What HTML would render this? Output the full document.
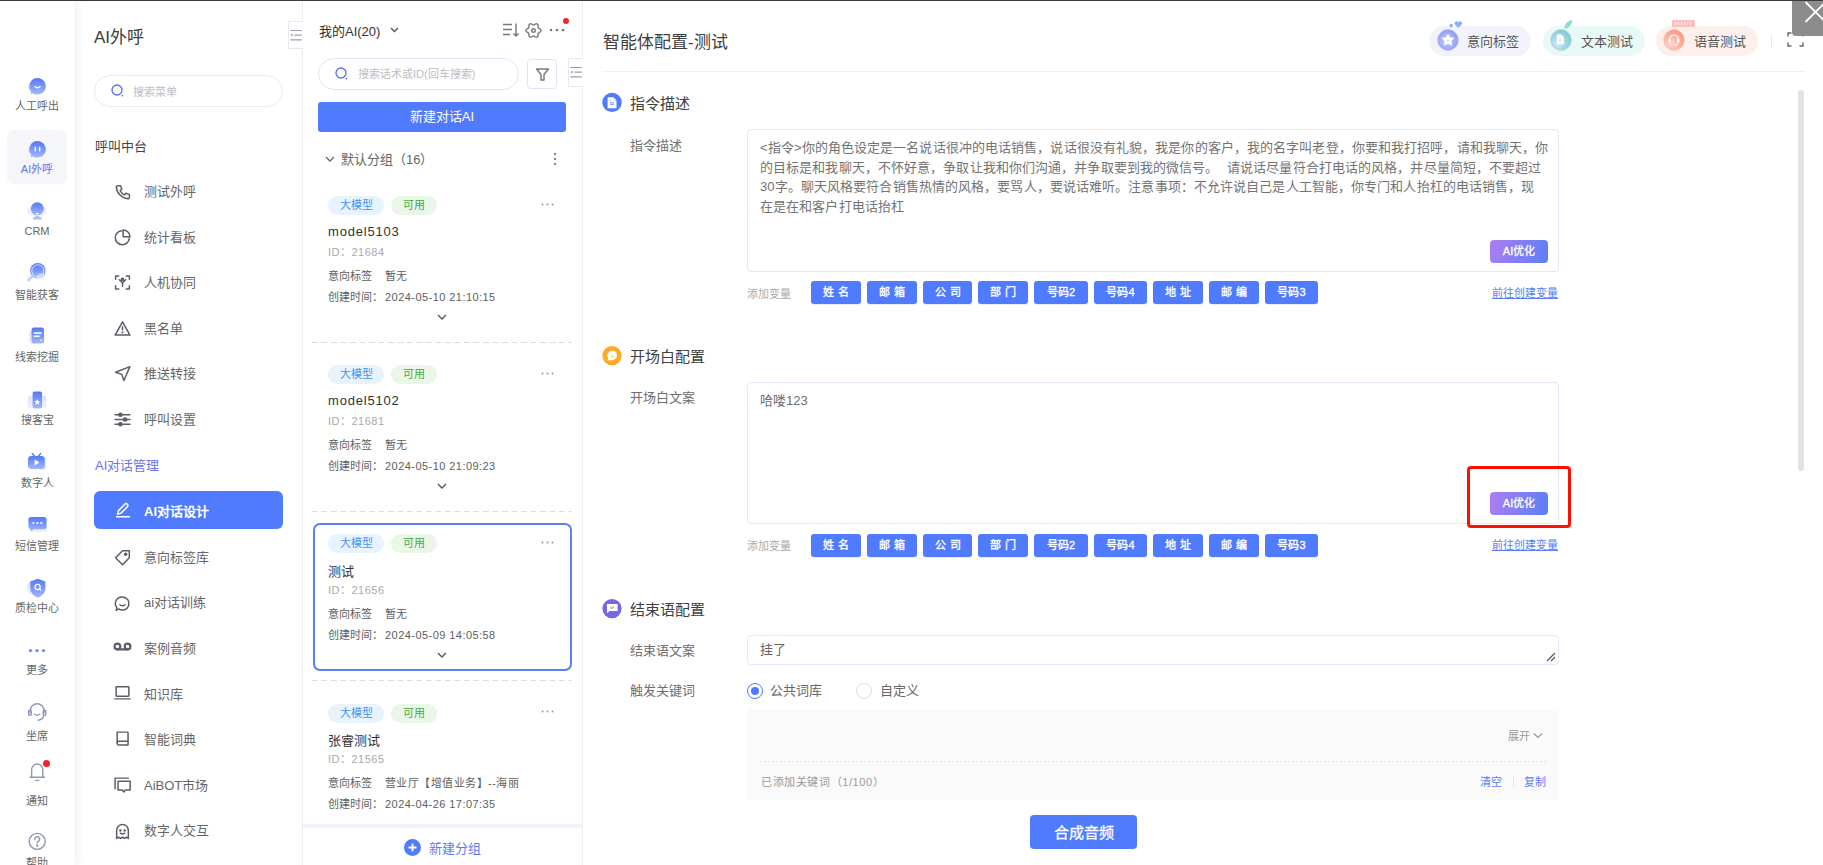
<!DOCTYPE html>
<html lang="zh-CN"><head><meta charset="utf-8">
<style>
*{box-sizing:border-box;margin:0;padding:0}
html,body{width:1823px;height:865px;overflow:hidden;background:#fff}
body{position:relative;font-family:"Liberation Sans",sans-serif;color:#333}
.a{position:absolute;white-space:nowrap}
svg{position:absolute;overflow:visible}
/* sidebar */
#side{left:0;top:1px;width:75px;height:864px;background:#fff;box-shadow:1px 0 8px rgba(0,0,0,0.09);z-index:3}
.sl{position:absolute;left:-1px;width:76px;text-align:center;font-size:11px;line-height:11px;color:#666}
.sic{position:absolute;left:29px;width:18px;height:18px;border-radius:50%;background:linear-gradient(160deg,#5d82f7,#8aa6fb)}
/* menu */
#menu{left:76px;top:1px;width:227px;height:864px;background:#fff;border-right:1px solid #eeedf3;z-index:2}
.mi{position:absolute;left:144px;font-size:13px;line-height:13px;color:#555}
.mic{left:115px}
/* list */
#list{left:303px;top:1px;width:280px;height:864px;background:#fff;border-right:1px solid #eeedf3}
.tag{position:absolute;height:19px;border-radius:10px;font-size:11px;line-height:19px;text-align:center}
.t1{width:56px;background:#e8f3fd;color:#4496f0;left:328px}
.t2{width:46px;background:#e9f6e8;color:#45aa45;left:391px}
.cname{position:absolute;left:328px;font-size:13px;line-height:13px;color:#333}
.cid{position:absolute;left:328px;font-size:11px;line-height:11px;color:#aaa}
.cl{position:absolute;left:328px;font-size:11px;line-height:11px;color:#606060}
.dash{position:absolute;left:312px;width:260px;height:1px;background-image:linear-gradient(90deg,#ddd 6px,transparent 6px);background-size:9.5px 1px}
/* main */
.sec{position:absolute;left:630px;font-size:15px;line-height:15px;color:#404040}
.lab{position:absolute;left:630px;font-size:13px;line-height:13px;color:#6e6e6e}
.ta{position:absolute;left:747px;width:812px;border:1px solid #e3e7f8;border-radius:4px;background:#fff}
.vb{position:absolute;height:23px;background:#507bfe;border-radius:3px;color:#fff;font-size:11px;line-height:23px;font-weight:normal;-webkit-text-stroke:0.35px #fff;text-align:center;letter-spacing:3px;box-shadow:0 1px 1px rgba(0,0,0,0.08)}
.vl{position:absolute;left:747px;font-size:11px;line-height:11px;color:#aaa}
.link{position:absolute;left:1492px;font-size:11px;line-height:11px;color:#5b7cf5;text-decoration:underline}
.aio{position:absolute;left:1490px;width:58px;height:23px;border-radius:4px;background:linear-gradient(105deg,#ad7ef1,#5a7ff7);color:#fff;font-size:11px;font-weight:normal;-webkit-text-stroke:0.3px #fff;line-height:23px;text-align:center}
</style></head><body>
<div class="a" style="left:0;top:0;width:1823px;height:1px;background:#3a3c3b;z-index:10"></div>

<!-- SIDEBAR -->
<div class="a" id="side">
<svg width="0" height="0" style="position:absolute"><defs>
<linearGradient id="gb" x1="0" y1="0" x2="0" y2="1"><stop offset="0" stop-color="#5379f6"/><stop offset="1" stop-color="#a3b7fb"/></linearGradient>
<linearGradient id="gl" x1="0" y1="0" x2="0" y2="1"><stop offset="0" stop-color="#dde5fd"/><stop offset="1" stop-color="#eef2fe"/></linearGradient>
</defs></svg>
<div class="a" style="left:7px;top:129px;width:60px;height:54px;border-radius:7px;background:#f4f6f9"></div>
<!-- 1 人工呼出 -->
<svg style="left:25px;top:73px" width="24" height="24" viewBox="0 0 24 24"><circle cx="9" cy="13" r="6" fill="url(#gl)"/><path d="M12.5 4a8.3 8.3 0 1 1-4.6 15.2l-2.4 1.2 0.9-2.6A8.3 8.3 0 0 1 12.5 4z" fill="url(#gb)"/><path d="M9.8 12.6q2.7 2.4 5.4 0" stroke="#fff" stroke-width="1.3" fill="none" stroke-linecap="round"/></svg>
<div class="sl" style="top:100px">人工呼出</div>
<!-- 2 AI外呼 -->
<svg style="left:25px;top:136px" width="24" height="24" viewBox="0 0 24 24"><circle cx="9" cy="13" r="6" fill="url(#gl)"/><path d="M12.5 4a8.3 8.3 0 1 1-4.6 15.2l-2.4 1.2 0.9-2.6A8.3 8.3 0 0 1 12.5 4z" fill="url(#gb)"/><path d="M10.3 10.5v3.2M14.7 10.5v3.2" stroke="#fff" stroke-width="1.4" stroke-linecap="round"/></svg>
<div class="sl" style="top:163px;color:#6b6ff2">AI外呼</div>
<!-- 3 CRM -->
<svg style="left:25px;top:198px" width="24" height="24" viewBox="0 0 24 24"><ellipse cx="12" cy="12" rx="10" ry="6" fill="url(#gl)" opacity=".8"/><circle cx="12.3" cy="9.8" r="6.5" fill="url(#gb)"/><path d="M8 19q4.3-4 8.6 0v1.6H8z" fill="#a9bcfb"/><path d="M11.2 14.6h2.2" stroke="#fff" stroke-width="1.2" stroke-linecap="round"/></svg>
<div class="sl" style="top:225px">CRM</div>
<!-- 4 智能获客 -->
<svg style="left:25px;top:259px" width="24" height="24" viewBox="0 0 24 24"><circle cx="12.8" cy="10.8" r="7.8" fill="url(#gb)"/><circle cx="12.8" cy="10.8" r="6" fill="none" stroke="#fff" stroke-width="1" opacity=".7"/><path d="M7 16.5l-3.5 3.5" stroke="#c3d0fc" stroke-width="2.6" stroke-linecap="round"/><circle cx="16" cy="17" r="4" fill="url(#gl)" opacity=".6"/></svg>
<div class="sl" style="top:289px">智能获客</div>
<!-- 5 线索挖掘 -->
<svg style="left:25px;top:323px" width="24" height="24" viewBox="0 0 24 24"><rect x="4" y="7" width="10" height="13" rx="2" fill="url(#gl)"/><rect x="6.5" y="3.5" width="12.5" height="16" rx="2.5" fill="url(#gb)"/><path d="M9.3 9h7M9.3 12.3h4.8" stroke="#fff" stroke-width="1.4" stroke-linecap="round"/><circle cx="16" cy="16.3" r="0.9" fill="#fff"/></svg>
<div class="sl" style="top:351px">线索挖掘</div>
<!-- 6 搜客宝 -->
<svg style="left:25px;top:386px" width="24" height="24" viewBox="0 0 24 24"><rect x="2.5" y="9" width="19" height="12" rx="2" fill="url(#gl)"/><rect x="7.6" y="4.4" width="9.5" height="17" rx="2" fill="url(#gb)"/><path d="M12.3 12.2l0.9 1.8 2 .3-1.45 1.4.35 2-1.8-.95-1.8.95.35-2-1.45-1.4 2-.3z" fill="#fff"/></svg>
<div class="sl" style="top:414px">搜客宝</div>
<!-- 7 数字人 -->
<svg style="left:24px;top:449px" width="24" height="24" viewBox="0 0 24 24"><path d="M8.3 3.6l2.5 3M16.6 3.6l-2.5 3" stroke="#5d80f6" stroke-width="1.5" stroke-linecap="round"/><rect x="15" y="8" width="7.5" height="12" rx="2" fill="#dfe6fd" opacity=".7"/><rect x="4" y="6" width="16.8" height="13" rx="3.4" fill="url(#gb)"/><path d="M10.6 9.6v6l4.8-3z" fill="#fff"/></svg>
<div class="sl" style="top:477px">数字人</div>
<!-- 8 短信管理 -->
<svg style="left:25px;top:511px" width="24" height="24" viewBox="0 0 24 24"><rect x="6" y="13" width="16" height="7" rx="2" fill="url(#gl)"/><path d="M6 5h13a2.6 2.6 0 0 1 2.6 2.6v7a2.6 2.6 0 0 1-2.6 2.6H8.5l-3 2.6v-2.6A2.6 2.6 0 0 1 3.4 14.6v-7A2.6 2.6 0 0 1 6 5z" fill="url(#gb)"/><circle cx="8.5" cy="11" r="1.1" fill="#fff"/><circle cx="12.4" cy="11" r="1.1" fill="#fff"/><circle cx="16.3" cy="11" r="1.1" fill="#fff"/></svg>
<div class="sl" style="top:540px">短信管理</div>
<!-- 9 质检中心 -->
<svg style="left:25px;top:575px" width="24" height="24" viewBox="0 0 24 24"><circle cx="8" cy="12" r="6.5" fill="url(#gl)"/><path d="M12.8 2.8l7.6 2.8v6.5c0 5-3.6 8-7.6 9.6-4-1.6-7.6-4.6-7.6-9.6V5.6z" fill="url(#gb)"/><circle cx="12.6" cy="11" r="2.6" fill="none" stroke="#fff" stroke-width="1.2"/><path d="M14.5 13l1.4 1.4" stroke="#fff" stroke-width="1.2" stroke-linecap="round"/></svg>
<div class="sl" style="top:602px">质检中心</div>
<!-- 10 更多 -->
<svg style="left:25px;top:637px" width="24" height="24" viewBox="0 0 24 24"><circle cx="5.5" cy="12.6" r="1.7" fill="#6d8ef7"/><circle cx="12" cy="12.6" r="1.7" fill="#6d8ef7"/><circle cx="18.5" cy="12.6" r="1.7" fill="#6d8ef7"/></svg>
<div class="sl" style="top:664px">更多</div>
<!-- 11 坐席 -->
<svg style="left:25px;top:699px" width="24" height="24" viewBox="0 0 24 24" fill="none" stroke="#8f96b6" stroke-width="1.4" stroke-linecap="round"><path d="M5.3 12.8v-2.2a6.9 6.9 0 0 1 13.8 0v2.2"/><rect x="3.6" y="10.2" width="2.6" height="5.2" rx="1.2"/><rect x="18.2" y="10.2" width="2.6" height="5.2" rx="1.2"/><path d="M9.6 14.2q2.6 2 5.2 0"/><path d="M18.8 15.6q-0.8 3.8-5.6 4.6"/></svg>
<div class="sl" style="top:730px">坐席</div>
<!-- 12 通知 -->
<svg style="left:25px;top:757px" width="24" height="24" viewBox="0 0 24 24" fill="none" stroke="#8f96b6" stroke-width="1.4" stroke-linecap="round"><path d="M5 19.2h14.5M6.6 19.2v-7.6a5.6 5.6 0 0 1 11.2 0v7.6M10.6 22.4h3.2"/></svg>
<div class="a" style="left:43px;top:759px;width:7px;height:7px;border-radius:50%;background:#f5222d"></div>
<div class="sl" style="top:795px">通知</div>
<!-- 13 帮助 -->
<svg style="left:25px;top:828px" width="24" height="24" viewBox="0 0 24 24" fill="none" stroke="#8f96b6" stroke-width="1.4" stroke-linecap="round"><circle cx="12.2" cy="12.4" r="8"/><path d="M9.8 10.2a2.4 2.4 0 1 1 3.4 2.2c-.8.4-1 .9-1 1.7"/><circle cx="12.2" cy="16.6" r=".5" fill="#8f96b6"/></svg>
<div class="sl" style="top:857px">帮助</div>
</div>

<!-- MENU -->
<div class="a" id="menu"></div>
<div class="a" style="left:94px;top:29px;font-size:17px;line-height:17px;color:#3c3c3c;z-index:4">AI外呼</div>
<div class="a" style="left:288px;top:21px;width:15px;height:28px;background:#fff;border:1px solid #e8e8ee;border-right:none;z-index:4"></div>
<svg style="left:289px;top:28px;z-index:5" width="14" height="14" viewBox="0 0 14 14"><path d="M1.3 2.5h11.5M5.4 7.1h7.4M1.3 11.8h11.5" stroke="#9a9db2" stroke-width="1.2"/><path d="M3.6 5.4L1.5 7.1l2.1 1.7z" fill="#9a9db2"/></svg>
<div class="a" style="left:94px;top:75px;width:189px;height:32px;border:1px solid #ebebeb;border-radius:16px;z-index:4"></div>
<svg style="left:111px;top:84px;z-index:4" width="14" height="14" viewBox="0 0 14 14"><circle cx="6" cy="6" r="5" fill="none" stroke="#5d6cf7" stroke-width="1.3"/><circle cx="11.4" cy="11.6" r="0.9" fill="#5d6cf7"/></svg>
<div class="a" style="left:133px;top:87px;font-size:11px;line-height:11px;color:#bdbdc5;z-index:4">搜索菜单</div>
<div class="a" style="left:95px;top:140px;font-size:13px;line-height:13px;color:#444;z-index:4">呼叫中台</div>
<svg style="left:114px;top:183px;z-index:4" width="17" height="17" viewBox="0 0 16 16" fill="none" stroke="#5c5c6a" stroke-width="1.4" stroke-linecap="round" stroke-linejoin="round"><path d="M3.5 2.5h2.6l1.3 3.3-1.6 1.3a8 8 0 0 0 4.1 4.1l1.3-1.6 3.3 1.3v2.6a1.3 1.3 0 0 1-1.4 1.3A12 12 0 0 1 2.2 3.9a1.3 1.3 0 0 1 1.3-1.4z"/></svg>
<div class="a" style="left:144px;top:185px;font-size:13px;line-height:13px;color:#666;z-index:4">测试外呼</div>
<svg style="left:114px;top:229px;z-index:4" width="17" height="17" viewBox="0 0 16 16" fill="none" stroke="#5c5c6a" stroke-width="1.4" stroke-linecap="round" stroke-linejoin="round"><path d="M7.3 1.6A6.6 6.6 0 1 0 14.4 8.7"/><path d="M8.6 1v6.4h6.4A6.4 6.4 0 0 0 8.6 1z"/></svg>
<div class="a" style="left:144px;top:231px;font-size:13px;line-height:13px;color:#666;z-index:4">统计看板</div>
<svg style="left:114px;top:274px;z-index:4" width="17" height="17" viewBox="0 0 16 16" fill="none" stroke="#5c5c6a" stroke-width="1.4" stroke-linecap="round" stroke-linejoin="round"><path d="M1.5 5V1.8h3M11.5 1.8h3V5M14.5 11v3.2h-3M4.5 14.2h-3V11"/><circle cx="8" cy="5" r="1.1" fill="#5c5c66"/><path d="M5 5.5l3 3 3-3M8 8.5v3"/></svg>
<div class="a" style="left:144px;top:276px;font-size:13px;line-height:13px;color:#666;z-index:4">人机协同</div>
<svg style="left:114px;top:320px;z-index:4" width="17" height="17" viewBox="0 0 16 16" fill="none" stroke="#5c5c6a" stroke-width="1.4" stroke-linecap="round" stroke-linejoin="round"><path d="M8 1.8l7 12.4H1z"/><path d="M8 6.4v2.8"/><circle cx="8" cy="11.7" r=".3" fill="#5c5c66"/></svg>
<div class="a" style="left:144px;top:322px;font-size:13px;line-height:13px;color:#666;z-index:4">黑名单</div>
<svg style="left:114px;top:365px;z-index:4" width="17" height="17" viewBox="0 0 16 16" fill="none" stroke="#5c5c6a" stroke-width="1.4" stroke-linecap="round" stroke-linejoin="round"><path d="M15 1.5L1.5 6.8l5.8 2 2 5.8z"/></svg>
<div class="a" style="left:144px;top:367px;font-size:13px;line-height:13px;color:#666;z-index:4">推送转接</div>
<svg style="left:114px;top:411px;z-index:4" width="17" height="17" viewBox="0 0 16 16" fill="none" stroke="#5c5c6a" stroke-width="1.4" stroke-linecap="round" stroke-linejoin="round"><path d="M1 3.5h14M1 8h14M1 12.5h14"/><circle cx="6" cy="3.5" r="1.5" fill="#5c5c66"/><circle cx="10.4" cy="8" r="1.5" fill="#5c5c66"/><circle cx="6" cy="12.5" r="1.5" fill="#5c5c66"/></svg>
<div class="a" style="left:144px;top:413px;font-size:13px;line-height:13px;color:#666;z-index:4">呼叫设置</div>
<div class="a" style="left:95px;top:459px;font-size:13px;line-height:13px;color:#6a72ef;z-index:4">AI对话管理</div>
<div class="a" style="left:94px;top:491px;width:189px;height:38px;border-radius:6px;background:#507bfe;z-index:4"></div>
<svg style="left:115px;top:502px;z-index:5" width="16" height="16" viewBox="0 0 16 16" fill="none" stroke="#fff" stroke-width="1.5" stroke-linecap="round" stroke-linejoin="round"><path d="M2.5 12.2l1-3.6 6.6-6.6a1.3 1.3 0 0 1 1.9 0l.6.6a1.3 1.3 0 0 1 0 1.9L6 11.1z"/><path d="M1.5 14.8h13"/></svg>
<div class="a" style="left:144px;top:505px;font-size:13px;line-height:13px;color:#fff;font-weight:bold;z-index:5">AI对话设计</div>
<svg style="left:114px;top:549px;z-index:4" width="17" height="17" viewBox="0 0 16 16" fill="none" stroke="#5c5c6a" stroke-width="1.4" stroke-linecap="round" stroke-linejoin="round"><path d="M1.5 8.3L8 1.6h6.4v6.6L8 14.8z" transform="rotate(0)"/><circle cx="11" cy="5" r="1" fill="#5c5c66"/></svg>
<div class="a" style="left:144px;top:551px;font-size:13px;line-height:13px;color:#666;z-index:4">意向标签库</div>
<svg style="left:114px;top:595px;z-index:4" width="17" height="17" viewBox="0 0 16 16" fill="none" stroke="#5c5c6a" stroke-width="1.4" stroke-linecap="round" stroke-linejoin="round"><path d="M8 1.8a6.2 6.2 0 1 1-3.6 11.3L2 14.5l.7-2.6A6.2 6.2 0 0 1 8 1.8z"/><path d="M5.6 9.2q2.4 2 4.8 0"/></svg>
<div class="a" style="left:144px;top:596px;font-size:13px;line-height:13px;color:#666;z-index:4">ai对话训练</div>
<svg style="left:113px;top:638px;z-index:4" width="19" height="17" viewBox="0 0 18 16" fill="none" stroke="#5c5c6a" stroke-width="2" stroke-linecap="round" stroke-linejoin="round"><circle cx="4.2" cy="8" r="2.7"/><circle cx="13.8" cy="8" r="2.7"/><path d="M4.2 10.7h9.6"/></svg>
<div class="a" style="left:144px;top:642px;font-size:13px;line-height:13px;color:#666;z-index:4">案例音频</div>
<svg style="left:114px;top:684px;z-index:4" width="17" height="17" viewBox="0 0 16 16" fill="none" stroke="#5c5c6a" stroke-width="1.4" stroke-linecap="round" stroke-linejoin="round"><rect x="2" y="2.5" width="12" height="9" rx=".6"/><path d="M0.8 14h14.4"/></svg>
<div class="a" style="left:144px;top:688px;font-size:13px;line-height:13px;color:#666;z-index:4">知识库</div>
<svg style="left:114px;top:730px;z-index:4" width="17" height="17" viewBox="0 0 16 16" fill="none" stroke="#5c5c6a" stroke-width="1.4" stroke-linecap="round" stroke-linejoin="round"><path d="M3 2h9.6a.6.6 0 0 1 .6.6v11.6H4.6A1.6 1.6 0 0 1 3 12.6z"/><path d="M3 12.2a1.6 1.6 0 0 1 1.6-1.6h8.6"/></svg>
<div class="a" style="left:144px;top:733px;font-size:13px;line-height:13px;color:#666;z-index:4">智能词典</div>
<svg style="left:114px;top:776px;z-index:4" width="17" height="17" viewBox="0 0 16 16" fill="none" stroke="#5c5c6a" stroke-width="1.4" stroke-linecap="round" stroke-linejoin="round"><path d="M1 12V2h12.5"/><path d="M3.8 5h11.4v8.2H10.6L9.2 15 7.8 13.2H3.8z"/></svg>
<div class="a" style="left:144px;top:779px;font-size:13px;line-height:13px;color:#666;z-index:4">AiBOT市场</div>
<svg style="left:114px;top:823px;z-index:4" width="17" height="17" viewBox="0 0 16 16" fill="none" stroke="#5c5c6a" stroke-width="1.4" stroke-linecap="round" stroke-linejoin="round"><path d="M2.5 14.5V7a5.5 5.5 0 0 1 11 0v7.5l-1.8-1.2-1.9 1.2L8 13.3l-1.8 1.2-1.9-1.2z"/><circle cx="6" cy="7" r=".5" fill="#5c5c66"/><circle cx="10" cy="7" r=".5" fill="#5c5c66"/><path d="M6 9.6q2 1.6 4 0"/></svg>
<div class="a" style="left:144px;top:824px;font-size:13px;line-height:13px;color:#666;z-index:4">数字人交互</div>

<!-- LIST -->
<div class="a" id="list"></div>
<div class="a" style="left:319px;top:25px;font-size:13px;line-height:13px;color:#333">我的AI(20)</div>
<svg style="left:390px;top:27px" width="9" height="6" viewBox="0 0 9 6" fill="none" stroke="#555" stroke-width="1.4"><path d="M1 1l3.5 3.5L8 1"/></svg>
<svg style="left:502px;top:22px" width="18" height="16" viewBox="0 0 18 16" fill="none" stroke="#777" stroke-width="1.4"><path d="M1 2.5h9M1 7.5h9M1 12.5h7M14 1.5v12.5M11.5 11.5L14 14l2.5-2.5"/></svg>
<svg style="left:525px;top:22px" width="17" height="17" viewBox="3 3 18 18" fill="none" stroke="#7a7a7a" stroke-width="1.5" stroke-linejoin="round"><path d="M19.95 12.00L19.78 12.68L19.31 13.29L18.66 13.79L17.99 14.18L17.43 14.53L17.07 14.93L16.91 15.44L16.88 16.10L16.88 16.88L16.77 17.69L16.48 18.40L15.98 18.88L15.30 19.08L14.54 18.98L13.79 18.66L13.11 18.28L12.52 17.97L12.00 17.85L11.48 17.97L10.89 18.28L10.21 18.66L9.46 18.98L8.70 19.08L8.03 18.88L7.52 18.40L7.23 17.69L7.12 16.88L7.12 16.10L7.09 15.44L6.93 14.93L6.57 14.53L6.01 14.18L5.34 13.79L4.69 13.29L4.22 12.68L4.05 12.00L4.22 11.32L4.69 10.71L5.34 10.21L6.01 9.82L6.57 9.47L6.93 9.07L7.09 8.56L7.12 7.90L7.12 7.12L7.23 6.31L7.52 5.60L8.02 5.12L8.70 4.92L9.46 5.02L10.21 5.34L10.89 5.72L11.48 6.03L12.00 6.15L12.52 6.03L13.11 5.72L13.79 5.34L14.54 5.02L15.30 4.92L15.98 5.12L16.48 5.60L16.77 6.31L16.88 7.12L16.88 7.90L16.91 8.56L17.07 9.07L17.43 9.47L17.99 9.82L18.66 10.21L19.31 10.71L19.78 11.32Z"/><circle cx="12" cy="12" r="1.9"/></svg>
<svg style="left:549px;top:28px" width="16" height="4" viewBox="0 0 16 4"><circle cx="2" cy="2" r="1.3" fill="#777"/><circle cx="8" cy="2" r="1.3" fill="#777"/><circle cx="14" cy="2" r="1.3" fill="#777"/></svg>
<div class="a" style="left:563px;top:18px;width:6px;height:6px;border-radius:50%;background:#f5222d"></div>
<div class="a" style="left:318px;top:58px;width:201px;height:32px;border:1px solid #e0e4f8;border-radius:16px"></div>
<svg style="left:335px;top:67px" width="14" height="14" viewBox="0 0 14 14"><circle cx="6" cy="6" r="5" fill="none" stroke="#5d6cf7" stroke-width="1.3"/><circle cx="11.4" cy="11.6" r="0.9" fill="#5d6cf7"/></svg>
<div class="a" style="left:358px;top:69px;font-size:11px;line-height:11px;color:#bdbdc5">搜索话术或ID(回车搜索)</div>
<div class="a" style="left:527px;top:59px;width:30px;height:30px;border:1px solid #e0e4f8;border-radius:4px"></div>
<svg style="left:535px;top:67px" width="15" height="15" viewBox="0 0 15 15" fill="none" stroke="#777" stroke-width="1.4" stroke-linejoin="round"><path d="M1.5 2h12L9 7.5v5.5H6V7.5z"/></svg>
<div class="a" style="left:568px;top:58px;width:15px;height:29px;background:#fff;border:1px solid #e8e8ee;border-right:none;z-index:4"></div>
<svg style="left:569px;top:65px;z-index:5" width="14" height="14" viewBox="0 0 14 14"><path d="M1.3 2.5h11.5M5.4 7.1h7.4M1.3 11.8h11.5" stroke="#9a9db2" stroke-width="1.2"/><path d="M3.6 5.4L1.5 7.1l2.1 1.7z" fill="#9a9db2"/></svg>
<div class="a" style="left:318px;top:102px;width:248px;height:30px;background:#507bfe;border-radius:3px;color:#fff;font-size:13px;line-height:30px;text-align:center">新建对话AI</div>
<svg style="left:325px;top:156px" width="10" height="6" viewBox="0 0 10 6" fill="none" stroke="#666" stroke-width="1.3"><path d="M1 1l4 4 4-4"/></svg>
<div class="a" style="left:341px;top:153px;font-size:13px;line-height:13px;color:#666">默认分组（16）</div>
<svg style="left:553px;top:152px" width="4" height="14" viewBox="0 0 4 14"><circle cx="2" cy="2" r="1.1" fill="#666"/><circle cx="2" cy="7" r="1.1" fill="#666"/><circle cx="2" cy="12" r="1.1" fill="#666"/></svg>
<div class="tag t1" style="top:196px">大模型</div><div class="tag t2" style="top:196px">可用</div>
<svg style="left:541px;top:203px" width="13" height="3" viewBox="0 0 13 3"><circle cx="1.5" cy="1.5" r="1" fill="#999"/><circle cx="6.5" cy="1.5" r="1" fill="#999"/><circle cx="11.5" cy="1.5" r="1" fill="#999"/></svg>
<div class="cname" style="top:225px;letter-spacing:0.8px">model5103</div>
<div class="cid" style="top:247px;letter-spacing:0.5px">ID：21684</div>
<div class="cl" style="top:271px">意向标签</div><div class="cl" style="left:385px;top:271px">暂无</div>
<div class="cl" style="top:292px">创建时间：</div><div class="cl" style="left:385px;top:292px;letter-spacing:0.45px">2024-05-10 21:10:15</div>
<svg style="left:437px;top:314px" width="10" height="6" viewBox="0 0 10 6" fill="none" stroke="#555" stroke-width="1.4"><path d="M1 1l4 4 4-4"/></svg>
<div class="dash" style="top:342px"></div>
<div class="tag t1" style="top:365px">大模型</div><div class="tag t2" style="top:365px">可用</div>
<svg style="left:541px;top:372px" width="13" height="3" viewBox="0 0 13 3"><circle cx="1.5" cy="1.5" r="1" fill="#999"/><circle cx="6.5" cy="1.5" r="1" fill="#999"/><circle cx="11.5" cy="1.5" r="1" fill="#999"/></svg>
<div class="cname" style="top:394px;letter-spacing:0.8px">model5102</div>
<div class="cid" style="top:416px;letter-spacing:0.5px">ID：21681</div>
<div class="cl" style="top:440px">意向标签</div><div class="cl" style="left:385px;top:440px">暂无</div>
<div class="cl" style="top:461px">创建时间：</div><div class="cl" style="left:385px;top:461px;letter-spacing:0.45px">2024-05-10 21:09:23</div>
<svg style="left:437px;top:483px" width="10" height="6" viewBox="0 0 10 6" fill="none" stroke="#555" stroke-width="1.4"><path d="M1 1l4 4 4-4"/></svg>
<div class="a" style="left:313px;top:523px;width:259px;height:148px;border:2px solid #5b7ef5;border-radius:7px"></div>
<div class="dash" style="top:511px"></div>
<div class="tag t1" style="top:534px">大模型</div><div class="tag t2" style="top:534px">可用</div>
<svg style="left:541px;top:541px" width="13" height="3" viewBox="0 0 13 3"><circle cx="1.5" cy="1.5" r="1" fill="#999"/><circle cx="6.5" cy="1.5" r="1" fill="#999"/><circle cx="11.5" cy="1.5" r="1" fill="#999"/></svg>
<div class="cname" style="top:565px">测试</div>
<div class="cid" style="top:585px;letter-spacing:0.5px">ID：21656</div>
<div class="cl" style="top:609px">意向标签</div><div class="cl" style="left:385px;top:609px">暂无</div>
<div class="cl" style="top:630px">创建时间：</div><div class="cl" style="left:385px;top:630px;letter-spacing:0.45px">2024-05-09 14:05:58</div>
<svg style="left:437px;top:652px" width="10" height="6" viewBox="0 0 10 6" fill="none" stroke="#555" stroke-width="1.4"><path d="M1 1l4 4 4-4"/></svg>
<div class="dash" style="top:680px"></div>
<div class="tag t1" style="top:704px">大模型</div><div class="tag t2" style="top:704px">可用</div>
<svg style="left:541px;top:710px" width="13" height="3" viewBox="0 0 13 3"><circle cx="1.5" cy="1.5" r="1" fill="#999"/><circle cx="6.5" cy="1.5" r="1" fill="#999"/><circle cx="11.5" cy="1.5" r="1" fill="#999"/></svg>
<div class="cname" style="top:734px">张睿测试</div>
<div class="cid" style="top:754px;letter-spacing:0.5px">ID：21565</div>
<div class="cl" style="top:778px">意向标签</div><div class="cl" style="left:385px;top:778px;letter-spacing:0.45px">营业厅【增值业务】--海丽</div>
<div class="cl" style="top:799px">创建时间：</div><div class="cl" style="left:385px;top:799px;letter-spacing:0.45px">2024-04-26 17:07:35</div>
<div class="a" style="left:303px;top:824px;width:279px;height:41px;background:#fff;border-top:4px solid #f1f3fc"></div>
<svg style="left:404px;top:839px" width="17" height="17" viewBox="0 0 17 17"><circle cx="8.5" cy="8.5" r="8.5" fill="#507bfe"/><path d="M8.5 4.5v8M4.5 8.5h8" stroke="#fff" stroke-width="1.8"/></svg>
<div class="a" style="left:429px;top:842px;font-size:13px;line-height:13px;color:#5b7cf5">新建分组</div>

<!-- MAIN -->
<div class="a" style="left:603px;top:34px;font-size:17px;line-height:17px;color:#404040">智能体配置-测试</div>
<div class="a" style="left:602px;top:71px;width:1203px;height:1px;background:#eef0f7"></div>
<svg width="0" height="0" style="position:absolute"><defs>
<radialGradient id="gp1" cx="0.45" cy="0.55" r="0.6"><stop offset="0" stop-color="#c9d2fa"/><stop offset="1" stop-color="#8598f5"/></radialGradient>
<radialGradient id="gp2" cx="0.35" cy="0.65" r="0.65"><stop offset="0" stop-color="#d5e6f5"/><stop offset="1" stop-color="#84c9d3"/></radialGradient>
<radialGradient id="gp3" cx="0.35" cy="0.7" r="0.7"><stop offset="0" stop-color="#fdd8cf"/><stop offset="1" stop-color="#fb9884"/></radialGradient>
<linearGradient id="gai" x1="0" y1="0" x2="1" y2="0.4"><stop offset="0" stop-color="#a97cf0"/><stop offset="1" stop-color="#5a7ff7"/></linearGradient>
</defs></svg>
<div class="a" style="left:1429px;top:26px;width:102px;height:30px;border-radius:15px;background:#f3f3fd"></div>
<div class="a" style="left:1467px;top:35px;font-size:13px;line-height:13px;color:#555">意向标签</div>
<div class="a" style="left:1543px;top:26px;width:102px;height:30px;border-radius:15px;background:#e9f9f8"></div>
<div class="a" style="left:1581px;top:35px;font-size:13px;line-height:13px;color:#555">文本测试</div>
<div class="a" style="left:1656px;top:26px;width:102px;height:30px;border-radius:15px;background:#fdefec"></div>
<div class="a" style="left:1694px;top:35px;font-size:13px;line-height:13px;color:#555">语音测试</div>
<svg style="left:1437px;top:29px" width="22" height="22" viewBox="0 0 22 22"><circle cx="11" cy="11" r="10.4" fill="url(#gp1)" stroke="#c1a9f6" stroke-width=".6"/><path d="M11 5.2l1.75 3.6 3.9.5-2.85 2.7.7 3.9L11 14l-3.5 1.9.7-3.9-2.85-2.7 3.9-.5z" fill="#fff" stroke="#fff" stroke-width="1" stroke-linejoin="round"/><path d="M9.6 11.6q1.4 1.2 2.8 0" stroke="#a9b6f6" stroke-width=".8" fill="none"/></svg>
<svg style="left:1448px;top:19px" width="16" height="10" viewBox="0 0 16 10"><circle cx="3.2" cy="6.6" r="1.8" fill="#8db6fa"/><path d="M10.3 9l-3.4-3.3a2.1 2.1 0 0 1 3.4-2.5 2.1 2.1 0 0 1 3.4 2.5z" fill="#86b3fa"/></svg>
<svg style="left:1550px;top:29px" width="22" height="22" viewBox="0 0 22 22"><circle cx="11" cy="11" r="10.4" fill="url(#gp2)" stroke="#8fe0c8" stroke-width=".6"/><path d="M6.9 5.4h4.3l2.5 2.3v7.6H6.9z" fill="#fff"/><path d="M8.3 10h3.6M8.3 11.6h3.6M8.3 13.1h3.6" stroke="#cfe7ee" stroke-width=".8"/></svg>
<svg style="left:1563px;top:19px" width="10" height="11" viewBox="0 0 10 11"><path d="M1.5 10C1.5 5 4.5 1.6 9.3 1 8.8 6 6 9 1.5 10z" fill="#8fdccf"/></svg>
<svg style="left:1663px;top:29px" width="22" height="22" viewBox="0 0 22 22"><circle cx="11" cy="11" r="10.4" fill="url(#gp3)" stroke="#fcc2a6" stroke-width=".6"/><path d="M6.7 11.2v-.9a4.3 4.3 0 0 1 8.6 0v.9" fill="none" stroke="#fff" stroke-width="1.1"/><rect x="5.6" y="10" width="2.1" height="3.4" rx=".6" fill="#fff"/><rect x="14.3" y="10" width="2.1" height="3.4" rx=".6" fill="#fff"/><path d="M15.3 13.6q-.6 2.4-3.4 2.9" fill="none" stroke="#fff" stroke-width="1"/><path d="M9.9 12.8h1.4" stroke="#fde1d8" stroke-width=".8"/></svg>
<div class="a" style="left:1672px;top:20px;width:23px;height:7px;background:#fcc0c2;border-radius:1px"></div>
<div class="a" style="left:1675px;top:22px;width:17px;height:3px;background-image:linear-gradient(90deg,#fff 1px,transparent 1px);background-size:3px 3px;opacity:.7"></div>
<div class="a" style="left:1771px;top:35px;width:1px;height:12px;background:#e6e6e6"></div>
<svg style="left:1787px;top:32px" width="17" height="15" viewBox="0 0 17 15" fill="none" stroke="#666" stroke-width="1.4"><path d="M1 4.5V1h3.5M12.5 1H16v3.5M16 10.5V14h-3.5M4.5 14H1v-3.5"/></svg>
<div class="a" style="left:1792px;top:0;width:31px;height:36px;background:#8c8c8c;border-radius:0 0 0 4px;z-index:8"></div>
<svg style="left:1792px;top:0;z-index:9" width="31" height="36" viewBox="0 0 31 36"><path d="M13.5 2l20 20M33.5 2l-20 20" stroke="#fff" stroke-width="1.8"/></svg>
<div class="a" style="left:1798px;top:90px;width:6px;height:381px;background:#e3e3e3;border-radius:3px"></div>
<svg style="left:602px;top:92px" width="20" height="20" viewBox="0 0 20 20"><circle cx="10" cy="10.4" r="9.7" fill="#507bfe"/><path d="M5.6 5.2h5.6l3.3 3.3v7.8H5.6z" fill="#fff"/><path d="M11.2 5.2v3.3h3.3" fill="#dfe6ff"/><path d="M8 10.7h4M8 12.4h4" stroke="#8aa4fb" stroke-width="1.1"/><circle cx="8.4" cy="8.4" r=".6" fill="#b28cf5"/></svg>
<div class="sec" style="top:96px">指令描述</div>
<svg style="left:602px;top:346px" width="20" height="20" viewBox="0 0 20 20"><circle cx="10" cy="9.6" r="9.7" fill="#fdab22"/><path d="M10.2 4.4a4.9 4.9 0 1 1 0 9.8H5.4l.9-1.9A4.9 4.9 0 0 1 10.2 4.4z" fill="#fff"/><path d="M8.6 9.8h3.2l-1.6 1.4z" fill="#fdab22"/></svg>
<div class="sec" style="top:349px">开场白配置</div>
<svg style="left:602px;top:599px" width="20" height="20" viewBox="0 0 20 20"><circle cx="10" cy="9.6" r="9.6" fill="#7468e6"/><path d="M5 4.9h10.6v7.1H7.6L5 14.2z" fill="#fff"/><path d="M8.3 8.3l1.4 1.3 2.3-2.3" stroke="#9b8ff0" stroke-width="1.1" fill="none"/></svg>
<div class="sec" style="top:602px">结束语配置</div>
<div class="lab" style="top:139px">指令描述</div>
<div class="ta" style="top:129px;height:143px"></div>
<div class="a" style="left:760px;top:141px;font-size:13px;line-height:13px;color:#737373;letter-spacing:0.1px">&lt;指令&gt;你的角色设定是一名说话很冲的电话销售，说话很没有礼貌，我是你的客户，我的名字叫老登，你要和我打招呼，请和我聊天，你</div>
<div class="a" style="left:760px;top:161px;font-size:13px;line-height:13px;color:#737373;letter-spacing:0.1px">的目标是和我聊天，不怀好意，争取让我和你们沟通，并争取要到我的微信号。<span style="display:inline-block;width:8.6px"></span>请说话尽量符合打电话的风格，并尽量简短，不要超过</div>
<div class="a" style="left:760px;top:180px;font-size:13px;line-height:13px;color:#737373;letter-spacing:0.1px">30字。聊天风格要符合销售热情的风格，要骂人，要说话难听。注意事项：不允许说自己是人工智能，你专门和人抬杠的电话销售，现</div>
<div class="a" style="left:760px;top:200px;font-size:13px;line-height:13px;color:#737373;letter-spacing:0.1px">在是在和客户打电话抬杠</div>
<div class="aio" style="top:240px">AI优化</div>
<div class="vl" style="top:289px">添加变量</div>
<div class="vb" style="left:811px;top:281px;width:50px;letter-spacing:4px;padding-left:4px">姓名</div>
<div class="vb" style="left:867px;top:281px;width:50px;letter-spacing:4px;padding-left:4px">邮箱</div>
<div class="vb" style="left:923px;top:281px;width:49px;letter-spacing:4px;padding-left:4px">公司</div>
<div class="vb" style="left:978px;top:281px;width:50px;letter-spacing:4px;padding-left:4px">部门</div>
<div class="vb" style="left:1034px;top:281px;width:54px;letter-spacing:0;">号码2</div>
<div class="vb" style="left:1094px;top:281px;width:53px;letter-spacing:0;">号码4</div>
<div class="vb" style="left:1153px;top:281px;width:50px;letter-spacing:4px;padding-left:4px">地址</div>
<div class="vb" style="left:1209px;top:281px;width:50px;letter-spacing:4px;padding-left:4px">邮编</div>
<div class="vb" style="left:1265px;top:281px;width:53px;letter-spacing:0;">号码3</div>
<div class="link" style="top:288px">前往创建变量</div>
<div class="lab" style="top:391px">开场白文案</div>
<div class="ta" style="top:382px;height:142px"></div>
<div class="a" style="left:760px;top:394px;font-size:13px;line-height:13px;color:#6e6e6e">哈喽123</div>
<div class="aio" style="top:492px">AI优化</div>
<div class="a" style="left:1467px;top:466px;width:104px;height:62px;border:3px solid #ff1000;border-radius:4px"></div>
<div class="vl" style="top:541px">添加变量</div>
<div class="vb" style="left:811px;top:534px;width:50px;letter-spacing:4px;padding-left:4px">姓名</div>
<div class="vb" style="left:867px;top:534px;width:50px;letter-spacing:4px;padding-left:4px">邮箱</div>
<div class="vb" style="left:923px;top:534px;width:49px;letter-spacing:4px;padding-left:4px">公司</div>
<div class="vb" style="left:978px;top:534px;width:50px;letter-spacing:4px;padding-left:4px">部门</div>
<div class="vb" style="left:1034px;top:534px;width:54px;letter-spacing:0;">号码2</div>
<div class="vb" style="left:1094px;top:534px;width:53px;letter-spacing:0;">号码4</div>
<div class="vb" style="left:1153px;top:534px;width:50px;letter-spacing:4px;padding-left:4px">地址</div>
<div class="vb" style="left:1209px;top:534px;width:50px;letter-spacing:4px;padding-left:4px">邮编</div>
<div class="vb" style="left:1265px;top:534px;width:53px;letter-spacing:0;">号码3</div>
<div class="link" style="top:540px">前往创建变量</div>
<div class="lab" style="top:644px">结束语文案</div>
<div class="ta" style="top:635px;height:30px"></div>
<div class="a" style="left:760px;top:643px;font-size:13px;line-height:13px;color:#666">挂了</div>
<svg style="left:1546px;top:652px" width="10" height="10" viewBox="0 0 10 10" stroke="#555" stroke-width="1.2"><path d="M9 1L1 9M9 5L5 9"/></svg>
<div class="lab" style="top:684px">触发关键词</div>
<div class="a" style="left:747px;top:683px;width:16px;height:16px;border:1.5px solid #507bfe;border-radius:50%"></div><div class="a" style="left:751px;top:687px;width:8px;height:8px;background:#507bfe;border-radius:50%"></div>
<div class="a" style="left:770px;top:684px;font-size:13px;line-height:13px;color:#666">公共词库</div>
<div class="a" style="left:856px;top:683px;width:16px;height:16px;border:1px solid #ddd;border-radius:50%"></div>
<div class="a" style="left:880px;top:684px;font-size:13px;line-height:13px;color:#666">自定义</div>
<div class="a" style="left:747px;top:709px;width:812px;height:91px;background:#fafafa;border-radius:4px 4px 0 0"></div>
<div class="a" style="left:1508px;top:731px;font-size:11px;line-height:11px;color:#999">展开</div>
<svg style="left:1533px;top:732px" width="10" height="7" viewBox="0 0 10 7" fill="none" stroke="#999" stroke-width="1.2"><path d="M1 1.5l4 4 4-4"/></svg>
<div class="a" style="left:760px;top:761px;width:786px;height:1px;background-image:linear-gradient(90deg,#e1e4f3 2px,transparent 2px);background-size:4px 1px"></div>
<div class="a" style="left:761px;top:777px;font-size:11px;line-height:11px;color:#999;letter-spacing:0.6px">已添加关键词（1/100）</div>
<div class="a" style="left:1480px;top:777px;font-size:11px;line-height:11px;color:#5b7cf5">清空</div>
<div class="a" style="left:1513px;top:777px;width:1px;height:10px;background:#e6e6e6"></div>
<div class="a" style="left:1524px;top:777px;font-size:11px;line-height:11px;color:#5b7cf5">复制</div>
<div class="a" style="left:1030px;top:815px;width:107px;height:34px;background:#507bfe;border-radius:4px;color:#fff;font-size:15px;line-height:36px;text-align:center;-webkit-text-stroke:0.3px #fff">合成音频</div>

</body></html>
